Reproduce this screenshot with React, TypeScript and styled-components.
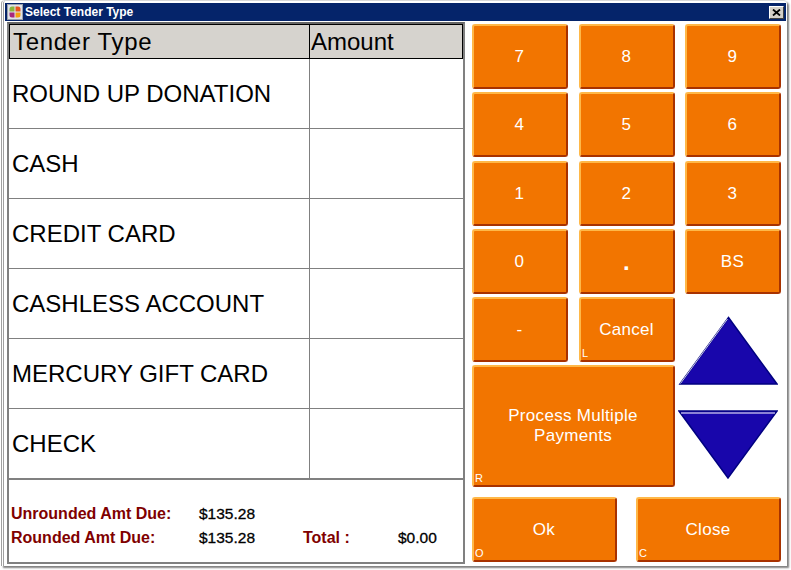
import React from 'react';
import styled, { createGlobalStyle } from 'styled-components';

const Global = createGlobalStyle`
  html, body {
    margin: 0;
    padding: 0;
    background: #fff;
    font-family: "Liberation Sans", Arial, sans-serif;
  }
`;

const tenders = ['ROUND UP DONATION', 'CASH', 'CREDIT CARD', 'CASHLESS ACCOUNT', 'MERCURY GIFT CARD', 'CHECK'];
const keys = ['7', '8', '9', '4', '5', '6', '1', '2', '3', '0', '.', 'BS'];

const App = () => {
  return (
    <Page>
      <Global />
      <Window>
        <TitleBar>
          <AppIcon viewBox="0 0 16 16">
            <rect x="0.5" y="0.5" width="15" height="15" fill="#dfe3ea" stroke="#9aa0aa" />
            <path d="M7.500 2.500H5a2.500 2.500 0 0 0-2.500 2.500v2.500h5z" fill="#8cb63c" />
            <path d="M8.500 2.500H11a2.500 2.500 0 0 1 2.500 2.500v2.500h-5z" fill="#e8541e" />
            <path d="M7.500 13.500H5a2.500 2.500 0 0 1-2.500-2.500V8.500h5z" fill="#a8277c" />
            <path d="M8.500 13.500H11a2.500 2.500 0 0 0 2.500-2.500V8.500h-5z" fill="#f4a011" />
          </AppIcon>
          <TitleText>Select Tender Type</TitleText>
          <CloseBox>
            <svg width="9" height="7" viewBox="0 0 9 7">
              <path d="M1 0.500 8 6.500M8 0.500 1 6.500" stroke="#000" strokeWidth="1.800" fill="none" />
            </svg>
          </CloseBox>
        </TitleBar>
        <Content>
          <LeftPanel>
            <Table>
              <HeaderRow>
                <NameHead>Tender Type</NameHead>
                <AmountHead>Amount</AmountHead>
              </HeaderRow>
              {tenders.map((t) => (
                <Row key={t}>
                  <NameCell>{t}</NameCell>
                  <div />
                </Row>
              ))}
            </Table>
            <Summary>
              <Label>Unrounded Amt Due:</Label>
              <Value>$135.28</Value>
              <span />
              <span />
              <Label>Rounded Amt Due:</Label>
              <Value>$135.28</Value>
              <Label>Total :</Label>
              <Value>$0.00</Value>
            </Summary>
          </LeftPanel>
          <RightPanel>
            <KeyGrid>
              {keys.map((k) => (
                <Key key={k} $dot={k === '.'}>{k}</Key>
              ))}
              <Key>-</Key>
              <Key>
                Cancel
                <Hotkey>L</Hotkey>
              </Key>
              <ArrowColumn>
                <Arrow viewBox="0 0 100 69" width="100" height="69">
                  <polygon points="50.500,1.500 99,68 2,68" fill="#1806ab" stroke="#000080" strokeWidth="1.500" />
                  <line x1="49.500" y1="3" x2="2.500" y2="67.500" stroke="#fff" strokeWidth="0.800" />
                </Arrow>
                <Arrow viewBox="0 0 100 69" width="100" height="69">
                  <polygon points="1,1 99,1 50,68" fill="#1806ab" stroke="#000080" strokeWidth="1.500" />
                  <line x1="3" y1="3" x2="97" y2="3" stroke="#fff" strokeWidth="1" />
                </Arrow>
              </ArrowColumn>
              <WideKey>
                Process Multiple
                <br />
                Payments
                <Hotkey>R</Hotkey>
              </WideKey>
            </KeyGrid>
            <BottomRow>
              <ActionKey>
                Ok
                <Hotkey>O</Hotkey>
              </ActionKey>
              <ActionKey>
                Close
                <Hotkey>C</Hotkey>
              </ActionKey>
            </BottomRow>
          </RightPanel>
        </Content>
      </Window>
    </Page>
  );
};

export default App;

const Page = styled.div`
  width: 791px;
  height: 570px;
  overflow: hidden;
  background: #fff;
`;

const Window = styled.div`
  margin-left: 1px;
  width: 786px;
  height: 566px;
  box-sizing: border-box;
  background: #fff;
  border-left: 3px double #a0a0a0;
  border-top: 1px solid #d8d8d8;
  border-radius: 4px 4px 0 0;
  box-shadow: 2px 2px 2px #808080;
  padding: 2px 1px 0 1px;
  display: flex;
  flex-direction: column;
`;

const TitleBar = styled.div`
  height: 18px;
  flex: none;
  background: #05246a;
  display: flex;
  align-items: center;
  padding: 0 2px 0 2px;
`;

const AppIcon = styled.svg`
  width: 16px;
  height: 16px;
  flex: none;
`;

const TitleText = styled.div`
  margin-left: 2px;
  color: #fff;
  font: bold 12px "Liberation Sans", Arial, sans-serif;
  flex: 1;
`;

const CloseBox = styled.div`
  width: 15px;
  height: 13px;
  box-sizing: border-box;
  background: #d4d0c8;
  border: 1px solid;
  border-color: #fff #404040 #404040 #fff;
  display: flex;
  align-items: center;
  justify-content: center;
`;

const Content = styled.div`
  flex: 1;
  display: flex;
  padding: 1px 0 0 2px;
  min-height: 0;
`;

const LeftPanel = styled.div`
  width: 458px;
  height: 542px;
  box-sizing: border-box;
  border: 2px solid #808080;
  border-top-color: #666;
  display: flex;
  flex-direction: column;
`;

const Table = styled.div`
  display: flex;
  flex-direction: column;
`;

const HeaderRow = styled.div`
  display: grid;
  grid-template-columns: 300px 1fr;
  height: 35px;
  box-sizing: border-box;
  background: #d6d3ce;
  border: 1px solid #000;
`;

const NameHead = styled.div`
  font-size: 24px;
  line-height: 33px;
  padding-left: 3px;
  letter-spacing: 0.7px;
  color: #000;
  border-right: 1px solid #000;
`;

const AmountHead = styled.div`
  font-size: 24px;
  line-height: 33px;
  padding-left: 1px;
  color: #000;
`;

const Row = styled.div`
  display: grid;
  grid-template-columns: 301px 1fr;
  height: 70px;
  box-sizing: border-box;
  border-bottom: 1px solid #808080;
`;

const NameCell = styled.div`
  font-size: 24px;
  padding-left: 3px;
  display: flex;
  align-items: center;
  color: #000;
  border-right: 1px solid #808080;
`;

const Summary = styled.div`
  display: grid;
  grid-template-columns: 188px 104px 95px 1fr;
  grid-auto-rows: 24px;
  border-top: 1px solid #808080;
  padding: 22px 0 0 2px;
  line-height: 24px;
`;

const Label = styled.div`
  color: #800000;
  font-size: 16px;
  font-weight: bold;
`;

const Value = styled.div`
  color: #000;
  font-size: 15.5px;
  -webkit-text-stroke: 0.3px #000;
`;

const RightPanel = styled.div`
  margin: 2px 0 0 7px;
  width: 309px;
  display: flex;
  flex-direction: column;
`;

const KeyGrid = styled.div`
  display: grid;
  grid-template-columns: 97px 96px 96px;
  grid-template-rows: 65px 66px 65px 65px 65px 122px;
  column-gap: 10px;
  row-gap: 3px;
`;

const Key = styled.button<{ $dot?: boolean }>`
  position: relative;
  width: 96px;
  height: 65px;
  justify-self: start;
  align-self: start;
  margin: 0;
  padding: 0 1px 0 0;
  box-sizing: border-box;
  background: #f27500;
  color: #fff;
  font-family: "Liberation Sans", Arial, sans-serif;
  font-size: ${(p) => (p.$dot ? '24px' : '17px')};
  font-weight: ${(p) => (p.$dot ? 'bold' : 'normal')};
  letter-spacing: 0.3px;
  border: 2px solid;
  border-color: #ffb848 #a83200 #a83200 #ffb848;
  border-radius: 3px;
`;

const WideKey = styled(Key)`
  grid-column: 1 / span 2;
  width: 203px;
  height: 122px;
  line-height: 20px;
`;

const ActionKey = styled(Key)`
  width: 145px;
`;

const Hotkey = styled.span`
  position: absolute;
  left: 1px;
  bottom: 1px;
  font-size: 11px;
  line-height: 12px;
  letter-spacing: 0;
  font-weight: normal;
`;

const ArrowColumn = styled.div`
  grid-row: 5 / span 2;
  grid-column: 3;
  margin-left: -7px;
  padding-top: 19px;
  display: flex;
  flex-direction: column;
  gap: 25px;
`;

const Arrow = styled.svg`
  display: block;
  flex: none;
`;

const BottomRow = styled.div`
  margin-top: 10px;
  display: flex;
  justify-content: space-between;
  width: 309px;
`;
